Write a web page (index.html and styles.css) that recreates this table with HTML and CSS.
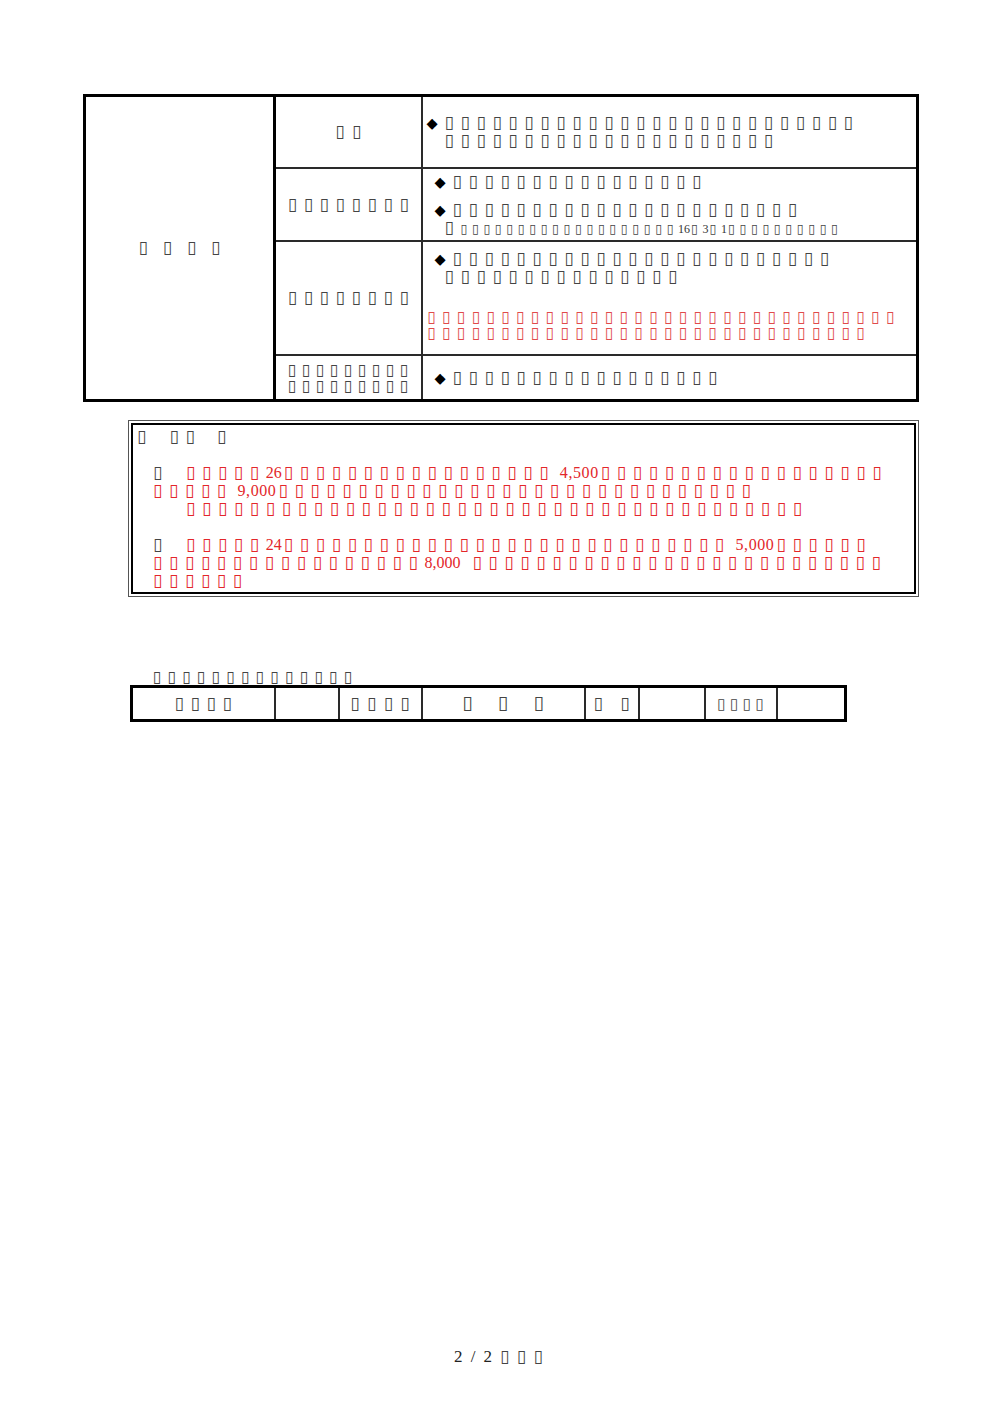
FILE: index.html
```html
<!DOCTYPE html>
<html lang="ja">
<head>
<meta charset="utf-8">
<title>2 / 2</title>
<link rel="stylesheet" href="styles.css">
</head>
<body>
<div class="page">

<table class="t1">
  <colgroup><col class="w1"><col class="w2"><col class="w3"></colgroup>
  <tr class="r1">
    <td class="c1" rowspan="4"><span class="t big ctr">▯▯▯▯</span></td>
    <td class="c2"><span class="t k2 ctr">▯▯</span></td>
    <td class="c3">
      <div class="li first"><span class="dm">◆</span><span class="t">▯▯▯▯▯▯▯▯▯▯▯▯▯▯▯▯▯▯▯▯▯▯▯▯▯▯</span><br><span class="t">▯▯▯▯▯▯▯▯▯▯▯▯▯▯▯▯▯▯▯▯▯</span></div>
    </td>
  </tr>
  <tr class="r2">
    <td class="c2"><span class="t ctr">▯▯▯▯▯▯▯▯</span></td>
    <td class="c3">
      <div class="li"><span class="dm">◆</span><span class="t">▯▯▯▯▯▯▯▯▯▯▯▯▯▯▯▯</span></div>
      <div class="li second"><span class="dm">◆</span><span class="t">▯▯▯▯▯▯▯▯▯▯▯▯▯▯▯▯▯▯▯▯▯▯</span><br><span class="small-line"><span class="t">▯</span><span class="t sm">▯▯▯▯▯▯▯▯▯▯▯▯▯▯▯▯▯▯▯</span><span class="dg sd">16</span><span class="t sm">▯</span><span class="dg sd">3</span><span class="t sm">▯</span><span class="dg sd">1</span><span class="t sm">▯▯▯▯▯▯▯▯▯▯</span></span></div>
    </td>
  </tr>
  <tr class="r3">
    <td class="c2"><span class="t ctr">▯▯▯▯▯▯▯▯</span></td>
    <td class="c3 pb">
      <div class="li"><span class="dm">◆</span><span class="t">▯▯▯▯▯▯▯▯▯▯▯▯▯▯▯▯▯▯▯▯▯▯▯▯</span><br><span class="t">▯▯▯▯▯▯▯▯▯▯▯▯▯▯▯</span></div>
      <div class="red-note"><span class="t rd">▯▯▯▯▯▯▯▯▯▯▯▯▯▯▯▯▯▯▯▯▯▯▯▯▯▯▯▯▯▯▯▯</span><br><span class="t rd">▯▯▯▯▯▯▯▯▯▯▯▯▯▯▯▯▯▯▯▯▯▯▯▯▯▯▯▯▯▯</span></div>
    </td>
  </tr>
  <tr class="r4">
    <td class="c2 two"><span class="t lb4 ctr">▯▯▯▯▯▯▯▯▯</span><br><span class="t lb4 ctr">▯▯▯▯▯▯▯▯▯</span></td>
    <td class="c3">
      <div class="li"><span class="dm">◆</span><span class="t">▯▯▯▯▯▯▯▯▯▯▯▯▯▯▯▯▯</span></div>
    </td>
  </tr>
</table>

<div class="note">
  <div class="note-in">
    <div class="note-head"><span class="t">▯</span><span class="t h1">▯▯</span><span class="t h2">▯</span></div>
    <div class="blank"></div>
    <div class="item">
      <span class="t">▯</span><span class="gap"></span><span class="t r">▯▯▯▯▯</span><span class="dg r">26</span><span class="t r">▯▯▯▯▯▯▯▯▯▯▯▯▯▯▯▯▯</span><span class="dg r sp">4,500</span><span class="t r">▯▯▯▯▯▯▯▯▯▯▯▯▯▯▯▯▯▯</span><br>
      <span class="t r">▯▯▯▯▯</span><span class="dg r sp">9,000</span><span class="t r">▯▯▯▯▯▯▯▯▯▯▯▯▯▯▯▯▯▯▯▯▯▯▯▯▯▯▯▯▯▯</span><br>
      <span class="ind"></span><span class="t r">▯▯▯▯▯▯▯▯▯▯▯▯▯▯▯▯▯▯▯▯▯▯▯▯▯▯▯▯▯▯▯▯▯▯▯▯▯▯▯</span>
    </div>
    <div class="blank"></div>
    <div class="item">
      <span class="t">▯</span><span class="gap"></span><span class="t r">▯▯▯▯▯</span><span class="dg r">24</span><span class="t r">▯▯▯▯▯▯▯▯▯▯▯▯▯▯▯▯▯▯▯▯▯▯▯▯▯▯▯▯</span><span class="dg r sp">5,000</span><span class="t r">▯▯▯▯▯▯</span><br>
      <span class="t r">▯▯▯▯▯▯▯▯▯▯▯▯▯▯▯▯▯</span><span class="dg r">8,000</span><span class="t r sp2">▯▯▯▯▯▯▯▯▯▯▯▯▯▯▯▯▯▯▯▯▯▯▯▯▯▯</span><br>
      <span class="t r">▯▯▯▯▯▯</span>
    </div>
  </div>
</div>

<div class="caption"><span class="t cap">▯▯▯▯▯▯▯▯▯▯▯▯▯▯</span></div>

<table class="t3">
  <colgroup><col class="a1"><col class="a2"><col class="a3"><col class="a4"><col class="a5"><col class="a6"><col class="a7"><col class="a8"></colgroup>
  <tr>
    <td><span class="t ctr">▯▯▯▯</span></td>
    <td></td>
    <td><span class="t k2 ctr">▯▯▯▯</span></td>
    <td><span class="t wide ctr">▯▯▯</span></td>
    <td><span class="t k27 ctr">▯▯</span></td>
    <td></td>
    <td><span class="t t7 ctr">▯▯▯▯</span></td>
    <td></td>
  </tr>
</table>

<div class="footer"><span class="pg">2 / 2</span> <span class="t k2">▯▯▯</span></div>

</div>
</body>
</html>
```
FILE: styles.css
```css
html, body {
  margin: 0;
  padding: 0;
  background: #fff;
}
body {
  font-family: "Liberation Serif", "Noto Sans CJK JP", serif;
  font-size: 16px;
  color: #1a1a1a;
}
.page {
  width: 1000px;
  padding-top: 94px;
}

/* tofu-like box glyph runs */
.t {
  --fs: 17px;
  --p: 16.3px;
  --ls: calc(var(--p) - var(--fs) * 0.57);
  font-family: "DejaVu Sans", sans-serif;
  font-size: var(--fs);
  letter-spacing: var(--ls);
  line-height: 0;
  color: #444;
}
.t.ctr { margin-right: calc(-1 * var(--ls)); }
.t.big { --p: 24.5px; }
.t.k2 { --p: 17px; }
.t.sm { --fs: 12.5px; --p: 11.7px; }
.t.rd { --fs: 15.5px; --p: 15.1px; color: #e04a4a; }
.t.lb4 { --fs: 15.5px; --p: 14.3px; }
.t.cap { --fs: 15.5px; --p: 15px; }
.t.t7 { --fs: 15px; --p: 13px; }
.t.wide { --fs: 19px; --p: 36px; }
.t.k27 { --p: 27px; }

.dm {
  display: inline-block;
  width: 18px;
  text-indent: 0;
  font-family: "DejaVu Sans", sans-serif;
  font-size: 14.5px;
  line-height: 0;
  color: #000;
}
.dg {
  font-family: "Liberation Serif", serif;
  font-size: 16px;
  line-height: 0;
  margin-right: 2px;
}
.dg.sd { font-size: 12px; margin-right: 1px; color: #333; }
.dg.sp { letter-spacing: 0.6px; }
.dg.sp::before { content: " "; }

/* main table */
.t1 {
  margin-left: 83px;
  width: 833px;
  border-collapse: collapse;
  table-layout: fixed;
  border: 3px solid #000;
}
.t1 .w1 { width: 190px; }
.t1 .w2 { width: 147px; }
.t1 .w3 { width: 496px; }
.t1 td {
  border: 2px solid #2a2a2a;
  padding: 0;
  vertical-align: middle;
  line-height: 18px;
}
.t1 td.c1 {
  border-right: 3px solid #000;
  border-left: 3px solid #000;
  text-align: center;
}
.t1 td.c2 { text-align: center; }
.t1 td.c2.two { line-height: 16px; }
.t1 td.c3 { border-right: 3px solid #000; }
.t1 td.c3.pb { padding-bottom: 6px; }
.t1 .r1 td { height: 70px; }
.t1 .r2 td { height: 71px; }
.t1 .r3 td { height: 112px; }
.t1 .r3 td.c3.pb { height: 106px; }
.t1 .r4 td { height: 43px; }
.t1 .r1 td.c1 { height: auto; }

.li {
  padding-left: 22px;
  text-indent: -10px;
}
.li.first { text-indent: -18px; }
.li.second { margin-top: 10px; }
.small-line { line-height: 17px; }
.red-note {
  margin-top: 23px;
  padding-left: 5px;
  line-height: 16px;
}

/* note box */
.note {
  margin: 18px 0 0 128px;
  width: 791px;
  box-sizing: border-box;
  border: 1px solid #555;
  padding: 2px;
}
.note-in {
  border: 2px solid #000;
  padding: 3px 0 2px 4px;
  line-height: 18px;
}
.note-head .h1 { margin-left: 16.5px; }
.note-head .h2 { margin-left: 15.5px; }
.blank { height: 18px; }
.item { padding-left: 16px; }
.gap { display: inline-block; width: 17px; }
.ind { display: inline-block; width: 33px; }
.r { color: #e3262a; }
.t.r { color: #e3262a; }
.sp2 { margin-left: 10px; }

/* caption + small table */
.caption {
  margin: 72px 0 0 153px;
  line-height: 16px;
}
.t3 {
  margin: 0 0 0 130px;
  width: 714px;
  border-collapse: collapse;
  table-layout: fixed;
  border: 3px solid #000;
}
.t3 td {
  border: 2px solid #2a2a2a;
  height: 31px;
  padding: 0;
  text-align: center;
  vertical-align: middle;
  line-height: 18px;
}
.t3 .a1 { width: 143px; }
.t3 .a2 { width: 64px; }
.t3 .a3 { width: 83px; }
.t3 .a4 { width: 163px; }
.t3 .a5 { width: 54px; }
.t3 .a6 { width: 66px; }
.t3 .a7 { width: 72px; }
.t3 .a8 { width: 69px; }

/* footer */
.footer {
  margin-top: 625px;
  text-align: center;
  line-height: 20px;
  padding-left: 4px;
  word-spacing: 4px;
}
.footer .t { word-spacing: 0; }
.pg {
  font-family: "Liberation Serif", serif;
  font-size: 17px;
  color: #222;
  word-spacing: 4px;
}
```
